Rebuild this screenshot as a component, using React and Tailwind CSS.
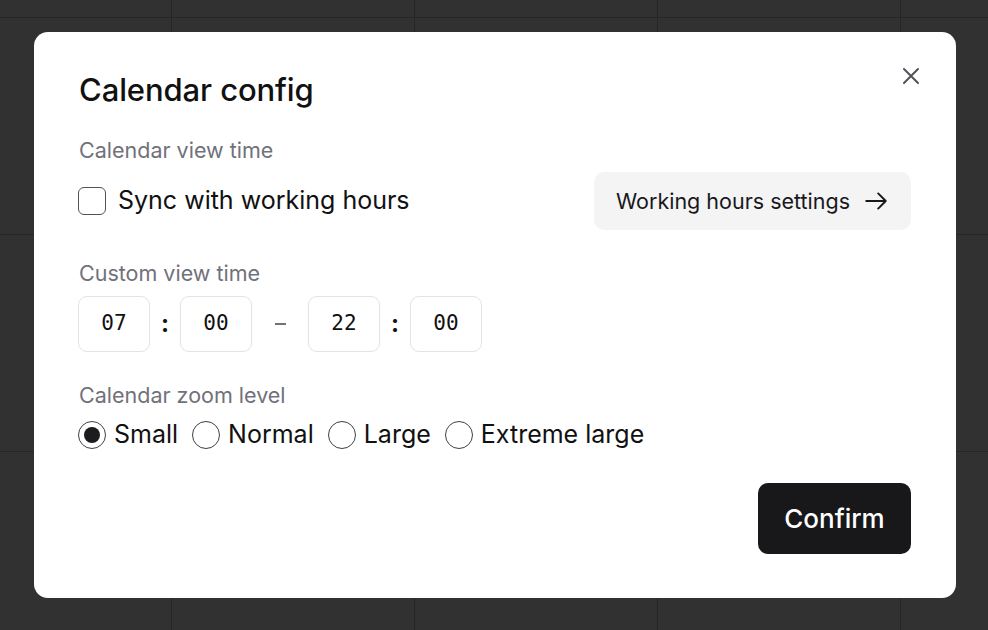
import React from "react";

function BgGrid() {
  const cols = ["w-[172px]", "w-[243px]", "w-[243px]", "w-[243px]", "w-[243px]"];
  const rows = ["h-[18px]", "h-[217px]", "h-[217px]", "h-[217px]"];
  return (
    <div className="absolute inset-0 flex flex-col bg-[#313131] overflow-hidden">
      {rows.map((r, i) => (
        <div key={i} className={`flex shrink-0 ${r} border-b border-[#262626]`}>
          {cols.map((c, j) => (
            <div key={j} className={`shrink-0 ${c} h-full border-r border-[#262626]`} />
          ))}
        </div>
      ))}
    </div>
  );
}

function TimeBox({ v }) {
  return (
    <div className="w-[72px] h-[56px] rounded-[9px] border border-[#e4e4e7] flex items-center justify-center text-[21px] text-[#111] font-['DejaVu_Sans_Mono',monospace]">
      {v}
    </div>
  );
}

function Radio({ label, checked }) {
  return (
    <div className="flex items-center gap-[8px]">
      <div className="w-[28px] h-[28px] rounded-full border-[1.5px] border-[#3f3f46] flex items-center justify-center">
        {checked && <div className="w-[16px] h-[16px] rounded-full bg-[#1c1c1e]" />}
      </div>
      <span>{label}</span>
    </div>
  );
}

export default function App() {
  return (
    <div className="relative w-[988px] h-[630px] overflow-hidden font-['Inter',sans-serif]">
      <BgGrid />
      <div className="absolute left-[34px] top-[32px] w-[922px] h-[566px] bg-white rounded-[14px] pl-[44px] pr-[45px] pt-[40px] pb-[44px] flex flex-col text-[#111]">
        <button className="absolute right-[34px] top-[33px] w-[22px] h-[22px] flex items-center justify-center text-[#52525b]">
          <svg width="20" height="20" viewBox="0 0 20 20" fill="none" stroke="currentColor" strokeWidth="2" strokeLinecap="round">
            <path d="M3 3L17 17M17 3L3 17" />
          </svg>
        </button>
        <h1 className="pl-[1px] text-[31px] leading-[36px] font-medium tracking-[-0.1px]">Calendar config</h1>

        <div className="pl-[1px] mt-[28px] text-[21.5px] leading-[28px] text-[#71717a]">Calendar view time</div>
        <div className="mt-[8px] h-[58px] flex items-center justify-between">
          <label className="flex items-center gap-[12px] text-[25px]">
            <div className="w-[28px] h-[28px] rounded-[6px] border-[1.5px] border-[#52525b]" />
            <span>Sync with working hours</span>
          </label>
          <button className="h-[58px] w-[317px] rounded-[10px] bg-[#f4f4f5] flex items-center justify-between pl-[22px] pr-[22px] text-[21.5px] text-[#18181b]">
            <span>Working hours settings</span>
            <svg width="26" height="26" viewBox="0 0 24 24" fill="none" stroke="currentColor" strokeWidth="1.8" strokeLinecap="round" strokeLinejoin="round">
              <path d="M3 12h18M14 5l7 7-7 7" />
            </svg>
          </button>
        </div>

        <div className="pl-[1px] mt-[29px] text-[21.5px] leading-[28px] text-[#71717a]">Custom view time</div>
        <div className="mt-[9px] flex items-center">
          <TimeBox v="07" />
          <div className="w-[30px] text-center text-[24px] font-bold">:</div>
          <TimeBox v="00" />
          <div className="w-[56px] flex justify-center">
            <div className="w-[11px] h-[2px] bg-[#71717a]" />
          </div>
          <TimeBox v="22" />
          <div className="w-[30px] text-center text-[24px] font-bold">:</div>
          <TimeBox v="00" />
        </div>

        <div className="pl-[1px] mt-[29px] text-[21.5px] leading-[28px] text-[#71717a]">Calendar zoom level</div>
        <div className="mt-[10px] h-[32px] flex items-center gap-[14px] text-[25px]">
          <Radio label="Small" checked />
          <Radio label="Normal" />
          <Radio label="Large" />
          <Radio label="Extreme large" />
        </div>

        <div className="mt-[32px] flex justify-end">
          <button className="w-[153px] h-[71px] rounded-[10px] bg-[#18181b] text-white text-[26px] font-medium">Confirm</button>
        </div>
      </div>
    </div>
  );
}
